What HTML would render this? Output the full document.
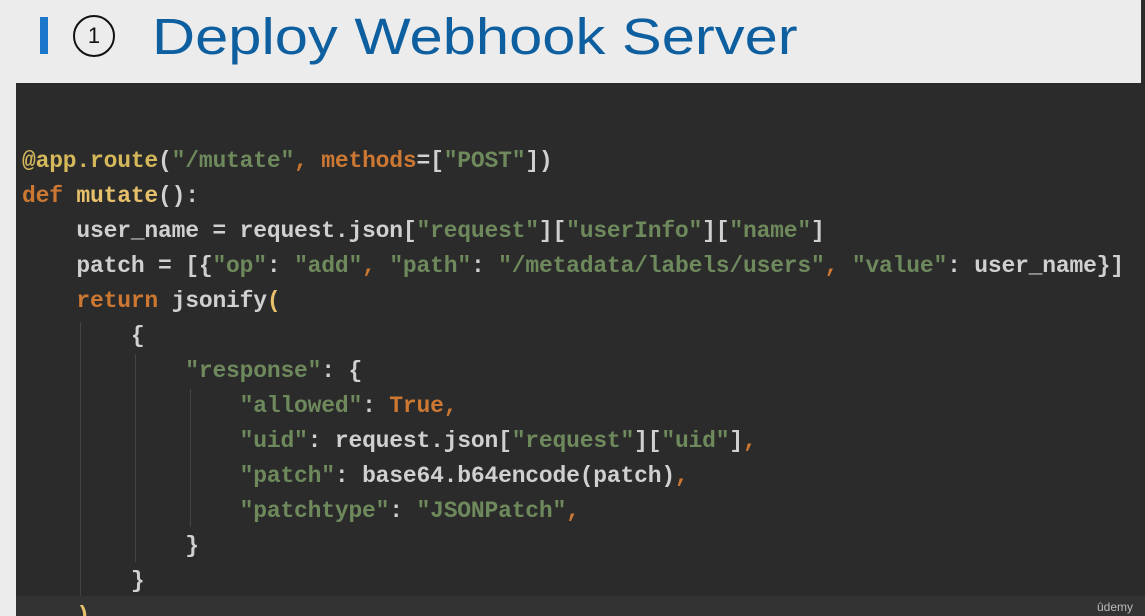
<!DOCTYPE html>
<html style="overflow:hidden"><head><style>
html,body{margin:0;width:1145px;height:616px;overflow:hidden}
body{background:#ececec;position:relative;font-family:"Liberation Sans",sans-serif}
.bar{position:absolute;left:40px;top:17px;width:8px;height:37px;background:#1a77c9}
.circ{position:absolute;left:73px;top:15px;width:42px;height:42px;border:2.5px solid #111;border-radius:50%;box-sizing:border-box;text-align:center;font-size:22px;line-height:37px;color:#111}
.title{position:absolute;left:152px;top:7px;font-size:51px;color:#0e5fa0;transform:scaleX(1.17);transform-origin:left top;white-space:nowrap}
.panel{position:absolute;left:16px;top:83px;width:1129px;height:533px;background:#2b2b2b}
.rstrip{position:absolute;left:1141px;top:0;width:4px;height:83px;background:#2b2b2b}
.cur{position:absolute;left:16px;top:596px;width:1129px;height:20px;background:#333}
pre{position:absolute;left:22px;top:144px;margin:0;font-family:"Liberation Mono",monospace;font-size:23px;letter-spacing:-0.2px;line-height:35px;color:#d0d0d0;font-weight:bold}
.s{color:#6e8a5c}.k{color:#cc7832}.y{color:#d4b85a}.f{color:#e6c06b}
.g{position:absolute;width:1px;background:#444}
.ud{position:absolute;right:12px;bottom:2px;font-size:12px;color:#bbb}
</style></head><body>
<div class="bar"></div><div class="circ">1</div>
<div class="title">Deploy Webhook Server</div>
<div class="rstrip"></div>
<div class="panel"></div>
<div class="cur"></div>
<div class="g" style="left:80px;top:322px;height:274px"></div>
<div class="g" style="left:135px;top:354px;height:208px"></div>
<div class="g" style="left:190px;top:389px;height:138px"></div>
<pre><span class="y">@app.route</span>(<span class="s">"/mutate"</span><span class="k">, methods</span>=[<span class="s">"POST"</span>])
<span class="k">def</span> <span class="f">mutate</span>():
    user_name = request.json[<span class="s">"request"</span>][<span class="s">"userInfo"</span>][<span class="s">"name"</span>]
    patch = [{<span class="s">"op"</span>: <span class="s">"add"</span><span class="k">,</span> <span class="s">"path"</span>: <span class="s">"/metadata/labels/users"</span><span class="k">,</span> <span class="s">"value"</span>: user_name}]
    <span class="k">return</span> jsonify<span class="f">(</span>
        {
            <span class="s">"response"</span>: {
                <span class="s">"allowed"</span>: <span class="k">True,</span>
                <span class="s">"uid"</span>: request.json[<span class="s">"request"</span>][<span class="s">"uid"</span>]<span class="k">,</span>
                <span class="s">"patch"</span>: base64.b64encode(patch)<span class="k">,</span>
                <span class="s">"patchtype"</span>: <span class="s">"JSONPatch"</span><span class="k">,</span>
            }
        }
    <span class="f">)</span></pre>
<div class="ud">ûdemy</div>
</body></html>
